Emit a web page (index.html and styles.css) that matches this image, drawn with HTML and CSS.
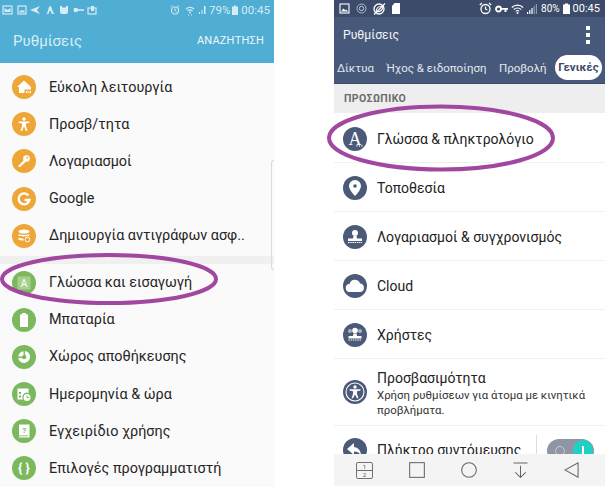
FILE: index.html
```html
<!DOCTYPE html>
<html lang="el">
<head>
    <meta charset="UTF-8">
    <meta name="viewport" content="width=device-width, initial-scale=1.0">
    <title>Ρυθμίσεις</title>
    <link rel="stylesheet" href="styles.css">
</head>
<body>
    <!-- left phone -->
    <div class="samsung">
        <div class="s-status">
            <div class="s-status-icons">
                <svg width="11" height="10" viewBox="0 0 11 10"><rect x="1" y="1" width="9" height="8" fill="none" stroke="#d5ecf5" stroke-width="1.2"/><path d="M2.500 7V3l3 2 3-2v4z" fill="#d5ecf5"/></svg>
                <svg width="10" height="10" viewBox="0 0 10 10"><rect x="1" y="1" width="8" height="8" fill="none" stroke="#d5ecf5" stroke-width="1.2"/><rect x="2.500" y="5.500" width="5" height="2" fill="#d5ecf5"/></svg>
                <svg width="11" height="10" viewBox="0 0 11 10"><path d="M0 5l10-4-3 4 3 4z" fill="#d5ecf5"/></svg>
                <svg width="11" height="10" viewBox="0 0 11 10"><path d="M1 9c2 0 2-7 4-8s2 7 5 8H7L5 5 3.500 9z" fill="#d5ecf5"/></svg>
                <svg width="10" height="10" viewBox="0 0 10 10"><path d="M1 1h2v1.500h4V1h2v6a2 2 0 0 1-2 2H3a2 2 0 0 1-2-2z" fill="#d5ecf5"/></svg>
                <svg width="11" height="10" viewBox="0 0 11 10"><circle cx="2.800" cy="5" r="2.300" fill="#d5ecf5"/><rect x="4" y="4.200" width="7" height="1.600" fill="#d5ecf5"/></svg>
                <svg width="10" height="10" viewBox="0 0 10 10"><rect x="1" y="3" width="8" height="6" fill="none" stroke="#d5ecf5" stroke-width="1.200"/><rect x="4" y="1" width="3" height="5" fill="#d5ecf5"/></svg>
            </div>
            <div class="s-status-right">
                <svg width="10" height="10" viewBox="0 0 10 10"><circle cx="5" cy="5.500" r="3.500" fill="none" stroke="#d5ecf5" stroke-width="1.100"/><path d="M5 3.500v2l1.500 1M.8 2L2.500.7M9.200 2L7.500.7" stroke="#d5ecf5" fill="none"/></svg>
                <svg class="s-wifi" width="10" height="11" viewBox="0 0 10 11"><path d="M1 4a6 6 0 0 1 8 0M2.500 5.800a4 4 0 0 1 5 0" stroke="#d5ecf5" fill="none" stroke-width="1.200"/><circle cx="5" cy="7.500" r="1" fill="#d5ecf5"/><path d="M3 10h1M6 10h1" stroke="#d5ecf5"/></svg>
                <svg width="9" height="10" viewBox="0 0 9 10"><path d="M1 9V7h1v2zM3.500 9V5h1v4zM6 9V1h1.500v8z" fill="#d5ecf5"/></svg>
                <span>79%</span>
                <svg width="6" height="10" viewBox="0 0 6 10"><path d="M0 1.500h2V.5h2v1h2V10H0z" fill="#d5ecf5"/></svg>
                <span class="s-time">00:45</span>
            </div>
        </div>
        <div class="s-header">
            <span class="s-title">Ρυθμίσεις</span>
            <span class="s-search">ΑΝΑΖΗΤΗΣΗ</span>
        </div>
        <div class="s-list">
            <div class="s-row">
                <span class="s-icon orange"><svg width="16" height="16" viewBox="0 0 16 16"><path d="M8 1.500L1 8h2v6h5.500V10.500H15V8z" fill="#fff"/><path d="M10 13h5M10 13l1.300-1M10 13l1.300 1M15 13l-1.300-1M15 13l-1.300 1" stroke="#fff" stroke-width=".9" fill="none"/></svg></span>
                Εύκολη λειτουργία
            </div>
            <div class="s-row">
                <span class="s-icon orange"><svg width="16" height="16" viewBox="0 0 16 16"><circle cx="8" cy="3" r="1.800" fill="#fff"/><path d="M2.500 5.500h11v1.300L10 7.500V10l1.500 5H10L8 10.500 6 15H4.500L6 10V7.500L2.500 6.800z" fill="#fff"/></svg></span>
                Προσβ/τητα
            </div>
            <div class="s-row">
                <span class="s-icon orange"><svg width="16" height="16" viewBox="0 0 16 16"><circle cx="10.500" cy="5.500" r="3.300" fill="#fff"/><path d="M8.500 6.500L2.500 12.500v1.500h2l1-1v-1h1l3-3z" fill="#fff"/><circle cx="11.300" cy="4.700" r=".9" fill="#eea637"/></svg></span>
                Λογαριασμοί
            </div>
            <div class="s-row">
                <span class="s-icon orange"><svg width="16" height="16" viewBox="0 0 16 16"><path d="M12.500 4.500A5.500 5.500 0 1 0 13.500 9H8.500" fill="none" stroke="#fff" stroke-width="2.300"/></svg></span>
                Google
            </div>
            <div class="s-row">
                <span class="s-icon orange"><svg width="16" height="16" viewBox="0 0 16 16"><ellipse cx="8" cy="3.500" rx="5.500" ry="2" fill="#fff"/><path d="M2.500 6c2 1.200 9 1.200 11 0v1.500c-2 1.200-9 1.200-11 0zM2.500 9.500c1.500.8 3.500 1 5 1v2c-2 0-4-.3-5-1z" fill="#fff"/><circle cx="11.500" cy="11.500" r="2.300" fill="none" stroke="#fff"/></svg></span>
                Δημιουργία αντιγράφων ασφ..
            </div>
            <div class="s-gap"></div>
            <div class="s-row">
                <span class="s-icon green"><svg width="16" height="16" viewBox="0 0 16 16"><rect x="1.500" y="1.500" width="13" height="13" rx="1" fill="#a6d08e"/><text x="8" y="12" text-anchor="middle" class="s-icon-a">A</text></svg></span>
                Γλώσσα και εισαγωγή
            </div>
            <div class="s-row">
                <span class="s-icon green"><svg width="16" height="16" viewBox="0 0 16 16"><path d="M6 1h4v1.500h2V15H4V2.500h2z" fill="#fff"/></svg></span>
                Μπαταρία
            </div>
            <div class="s-row">
                <span class="s-icon green"><svg width="16" height="16" viewBox="0 0 16 16"><path d="M9 2a6 6 0 1 1-6.800 7h3.700A2.400 2.400 0 1 0 9 5.700z" fill="#fff"/><path d="M7.500 2.200V6L6 7.500H2.300a6 6 0 0 1 5.200-5.300z" fill="#fff"/></svg></span>
                Χώρος αποθήκευσης
            </div>
            <div class="s-row">
                <span class="s-icon green"><svg width="16" height="16" viewBox="0 0 16 16"><path d="M1.500 2.500h11V7A4.500 4.500 0 0 0 7 13.500H1.500z" fill="#fff"/><rect x="3" y="6" width="2" height="2" fill="#7cb95e"/><rect x="3" y="9.500" width="2" height="2" fill="#7cb95e"/><circle cx="11" cy="11.500" r="3.500" fill="#fff"/><path d="M11 9.500v2h1.800" stroke="#7cb95e" fill="none"/></svg></span>
                Ημερομηνία &amp; ώρα
            </div>
            <div class="s-row">
                <span class="s-icon green"><svg width="16" height="16" viewBox="0 0 16 16"><path d="M3 1.500h10.500v13H3z" fill="#fff"/><path d="M3 12.800h9" stroke="#7cb95e" stroke-width=".8"/><text x="8.200" y="9.500" text-anchor="middle" class="s-icon-q">?</text></svg></span>
                Εγχειρίδιο χρήσης
            </div>
            <div class="s-row">
                <span class="s-icon green"><span class="s-braces">{ }</span></span>
                Επιλογές προγραμματιστή
            </div>
        </div>
        <div class="s-handle"></div>
    </div>

    <!-- right phone -->
    <div class="lg">
        <div class="lg-status">
            <div class="lg-status-icons">
                <svg width="11" height="11" viewBox="0 0 11 11"><rect x="1" y="1" width="9" height="9" fill="none" stroke="#fff" stroke-width="1.100"/><path d="M2 8.500l2.500-3 2 2 1-1 1.500 2z" fill="#fff"/></svg>
                <svg width="11" height="11" viewBox="0 0 11 11"><circle cx="5.500" cy="5.500" r="4.500" fill="none" stroke="#c8d0dd" stroke-width=".8"/><circle cx="5.500" cy="5.500" r="2.200" fill="none" stroke="#c8d0dd" stroke-width=".9"/></svg>
                <svg width="13" height="12" viewBox="0 0 13 12"><circle cx="6" cy="6" r="5" fill="none" stroke="#fff" stroke-width="1.300"/><path d="M3 9c0-4 3-6 7-6 0 4-3 6-7 6zM1 11.500L12 .5" fill="none" stroke="#fff" stroke-width="1.100"/></svg>
                <svg width="8" height="11" viewBox="0 0 8 11"><path d="M2.500 0H8v11H0V3z" fill="#fff"/></svg>
            </div>
            <div class="lg-status-right">
                <svg width="13" height="13" viewBox="0 0 13 13"><circle cx="6.500" cy="7" r="4.500" fill="none" stroke="#fff" stroke-width="1.300"/><path d="M6.500 4.500V7l1.800 1M.8 3L3 1M12.200 3L10 1" stroke="#fff" fill="none" stroke-width="1.200"/></svg>
                <svg class="lg-key" width="13" height="8" viewBox="0 0 13 8"><circle cx="3.500" cy="4" r="2.500" fill="none" stroke="#fff" stroke-width="1.800"/><path d="M5.500 3h7.500v1.800h-1.500V7H9.500V4.800h-4z" fill="#fff"/></svg>
                <svg width="13" height="10" viewBox="0 0 13 10"><path d="M.8 3.500a8 8 0 0 1 11.400 0M2.800 5.500a5.200 5.200 0 0 1 7.400 0M4.800 7.300a2.500 2.500 0 0 1 3.400 0" fill="none" stroke="#fff" stroke-width="1.100"/><circle cx="6.500" cy="9" r="1" fill="#fff"/></svg>
                <svg width="11" height="10" viewBox="0 0 11 10"><path d="M0 8h1.200v2H0zM2.200 6h1.200v4H2.200zM4.400 4h1.200v6H4.400z" fill="#fff"/><path d="M6.600 2h1.200v8H6.600zM8.800 0H10v10H8.800z" fill="#8c98ae"/></svg>
                <span class="lg-pct">80%</span>
                <svg width="7" height="11" viewBox="0 0 7 11"><path d="M0 1.500h2V.5h3v1h2V11H0z" fill="#fff"/></svg>
                <span>00:45</span>
            </div>
        </div>
        <div class="lg-header">
            <div class="lg-title-row">
                <span class="lg-title">Ρυθμίσεις</span>
                <span class="lg-dots"><i></i><i></i><i></i></span>
            </div>
            <div class="lg-tabs">
                <span class="lg-tab tab-net">Δίκτυα</span>
                <span class="lg-tab tab-sound">Ήχος &amp; ειδοποίηση</span>
                <span class="lg-tab tab-view">Προβολή</span>
                <span class="lg-tab-active">Γενικές</span>
            </div>
        </div>
        <div class="lg-section">ΠΡΟΣΩΠΙΚΟ</div>
        <div class="lg-list">
            <div class="lg-row">
                <span class="lg-icon"><span class="lg-letter">A</span><svg class="lg-letter-dots" width="7" height="2" viewBox="0 0 7 2"><circle cx="1" cy="1" r=".7" fill="#fff"/><circle cx="3.500" cy="1" r=".7" fill="#fff"/><circle cx="6" cy="1" r=".7" fill="#fff"/></svg></span>
                Γλώσσα &amp; πληκτρολόγιο
            </div>
            <div class="lg-row">
                <span class="lg-icon"><svg width="16" height="18" viewBox="0 0 16 18"><path d="M8 1a6 6 0 0 0-6 6c0 4 6 10 6 10s6-6 6-10a6 6 0 0 0-6-6z" fill="#fff"/><circle cx="8" cy="7" r="1.800" fill="#4a5a78"/></svg></span>
                Τοποθεσία
            </div>
            <div class="lg-row">
                <span class="lg-icon"><svg width="18" height="18" viewBox="0 0 18 18"><circle cx="9" cy="5" r="3" fill="#fff"/><path d="M7.500 8h3l.5 2.500H16V13H2v-2.500h5z" fill="#fff"/><path d="M2 14.500h14" stroke="#fff" stroke-dasharray="1.500 .7"/></svg></span>
                Λογαριασμοί &amp; συγχρονισμός
            </div>
            <div class="lg-row">
                <span class="lg-icon"><svg width="20" height="14" viewBox="0 0 20 14"><path d="M5 13a4 4 0 0 1-.5-8A5.500 5.500 0 0 1 15 4.500 4.300 4.300 0 0 1 15.500 13z" fill="#fff"/></svg></span>
                Cloud
            </div>
            <div class="lg-row">
                <span class="lg-icon"><svg width="20" height="18" viewBox="0 0 20 18"><circle cx="5" cy="5" r="2" fill="#aab3c4"/><circle cx="15" cy="5" r="2" fill="#aab3c4"/><circle cx="10" cy="4.500" r="2.800" fill="#fff"/><path d="M8.500 7.500h3l.5 2.500h4.500v2.500h-13V10H8z" fill="#fff"/><path d="M3.500 14h13" stroke="#fff" stroke-dasharray="1.500 .7"/></svg></span>
                Χρήστες
            </div>
            <div class="lg-row lg-row-tall">
                <span class="lg-icon"><svg width="20" height="20" viewBox="0 0 20 20"><circle cx="10" cy="10" r="9" fill="none" stroke="#fff" stroke-width="1.100"/><circle cx="10" cy="5" r="1.700" fill="#fff"/><path d="M4.500 7.300h11v1.200L12 9.300V12l1.500 4.300H12L10 12.500 8 16.300H6.500L8 12V9.300L4.500 8.500z" fill="#fff"/></svg></span>
                <div class="lg-row-text">
                    <div>Προσβασιμότητα</div>
                    <div class="lg-sub">Χρήση ρυθμίσεων για άτομα με κινητικά προβλήματα.</div>
                </div>
            </div>
            <div class="lg-row lg-row-cut">
                <span class="lg-icon"><svg width="18" height="16" viewBox="0 0 18 16"><path d="M8 1L1 7l7 6V9.500c3 0 5 1 7 4 0-5-3-8-7-8.500z" fill="#fff"/></svg></span>
                <span class="lg-cut-label">Πλήκτρο συντόμευσης</span>
                <span class="lg-switch-wrap"><span class="lg-switch"><i class="lg-switch-o"></i><i class="lg-knob"></i></span></span>
            </div>
        </div>
        <div class="lg-nav">
            <svg width="17" height="17" viewBox="0 0 18 18"><rect x=".5" y=".5" width="17" height="17" rx="1.500" fill="#f4f4f4" stroke="#666"/><path d="M.5 9h17" stroke="#666"/><text x="9" y="7.300" text-anchor="middle" class="nav-num">1</text><text x="9" y="15.800" text-anchor="middle" class="nav-num">2</text></svg>
            <svg width="16" height="16" viewBox="0 0 17 17"><rect x=".7" y=".7" width="15.600" height="15.600" fill="none" stroke="#666" stroke-width="1.100"/></svg>
            <svg width="16" height="16" viewBox="0 0 17 17"><circle cx="8.500" cy="8.500" r="7.800" fill="none" stroke="#666" stroke-width="1.100"/></svg>
            <svg width="15" height="16" viewBox="0 0 16 17"><path d="M.5 1h15M8 4v12.500M2.500 11L8 16.500 13.500 11" fill="none" stroke="#666" stroke-width="1.100"/></svg>
            <svg width="15" height="16" viewBox="0 0 16 17"><path d="M15 .8v15.400L1 8.500z" fill="none" stroke="#666" stroke-width="1.100"/></svg>
        </div>
    </div>

    <!-- hand drawn rings over the screenshots -->
    <svg class="ring ring-left" width="222" height="52" viewBox="0 0 222 52"><ellipse cx="109" cy="26" rx="107" ry="24" fill="none" stroke="#a2479f" stroke-width="4"/></svg>
    <svg class="ring ring-right" width="232" height="70" viewBox="0 0 232 70"><ellipse cx="116" cy="35" rx="112" ry="31.500" fill="none" stroke="#a2479f" stroke-width="4"/></svg>
</body>
</html>
```

FILE: styles.css
```css
body {
    margin: 0;
    width: 609px;
    height: 487px;
    overflow: hidden;
    display: flex;
    position: relative;
    background: #fff;
    font-family: Roboto, "Noto Sans", sans-serif;
}

/* left phone */
.samsung {
    width: 274px;
    height: 487px;
    margin-right: 60px;
    background: #fafafa;
    flex-shrink: 0;
    position: relative;
}
.s-status {
    height: 20px;
    background: #50add3;
    color: #d5ecf5;
    font-size: 11.5px;
    display: flex;
    justify-content: space-between;
    align-items: center;
    padding: 0 4px 0 2px;
}
.s-status-icons {
    display: flex;
    gap: 3.5px;
    align-items: center;
}
.s-status-right {
    display: flex;
    gap: 2px;
    align-items: center;
}
.s-wifi {
    margin-left: 3px;
    margin-right: 1px;
}
.s-time {
    margin-left: 1px;
}
.s-header {
    height: 41px;
    background: #50add3;
    display: flex;
    justify-content: space-between;
    align-items: center;
    padding: 0 10px 2px 13px;
}
.s-title {
    color: #d8eef7;
    font-size: 15px;
}
.s-search {
    color: #eef8fc;
    font-size: 11px;
    letter-spacing: .2px;
}
.s-list {
    padding-top: 5.5px;
}
.s-row {
    height: 37.2px;
    display: flex;
    align-items: center;
    gap: 13px;
    padding-left: 12px;
    font-size: 14.4px;
    color: #252525;
}
.s-icon {
    width: 24px;
    height: 24px;
    border-radius: 50%;
    display: flex;
    align-items: center;
    justify-content: center;
    flex-shrink: 0;
}
.orange {
    background: #eea637;
}
.green {
    background: #7cb95e;
}
.s-icon-a {
    font-size: 10px;
    fill: #fff;
}
.s-icon-q {
    font-size: 8px;
    font-weight: bold;
    fill: #7cb95e;
}
.s-braces {
    color: #fff;
    font-size: 13px;
    font-weight: bold;
    margin-top: -2px;
}
.s-gap {
    height: 8px;
    background: #f0f0f0;
    margin-top: 1.5px;
}
.s-handle {
    position: absolute;
    right: 0;
    top: 160px;
    width: 3px;
    height: 110px;
    border: 1px solid #dcdcdc;
    border-right: none;
    border-radius: 4px 0 0 4px;
    box-sizing: border-box;
}

/* right phone */
.lg {
    width: 271px;
    height: 486px;
    display: flex;
    flex-direction: column;
    flex-shrink: 0;
    background: #fff;
}
.lg-status {
    height: 17px;
    background: #3c4b6a;
    color: #fff;
    font-size: 11px;
    display: flex;
    justify-content: space-between;
    align-items: center;
    padding: 0 5px 0 5px;
}
.lg-status-icons {
    display: flex;
    gap: 6px;
    align-items: center;
}
.lg-status-right {
    display: flex;
    align-items: center;
    gap: 3px;
}
.lg-pct {
    font-size: 10px;
}
.lg-header {
    background: #47597a;
    height: 67px;
    border-bottom: 1px solid #3c4b6a;
    box-sizing: border-box;
}
.lg-title-row {
    height: 35px;
    display: flex;
    align-items: center;
    justify-content: space-between;
    padding: 0 15px 0 9px;
}
.lg-title {
    color: #f2f4f7;
    font-size: 12.2px;
}
.lg-dots {
    display: flex;
    flex-direction: column;
    gap: 3px;
}
.lg-dots i {
    width: 4px;
    height: 4px;
    background: #fff;
    display: block;
}
.lg-tabs {
    display: flex;
    align-items: center;
    height: 25px;
    margin-top: 3px;
    font-size: 11.5px;
    color: #e4e8ee;
    white-space: nowrap;
}
.lg-tab {
    display: block;
}
.tab-net {
    padding-left: 3px;
    width: 37px;
}
.tab-sound {
    margin-left: 12px;
    width: 100px;
    overflow: hidden;
}
.tab-view {
    margin-left: 13px;
    width: 46px;
}
.lg-tab-active {
    margin-left: 10px;
    width: 47px;
    height: 25px;
    line-height: 25px;
    border-radius: 13px;
    background: #fff;
    color: #3c4b6a;
    font-weight: bold;
    font-size: 11.5px;
    text-align: center;
}
.lg-section {
    height: 29px;
    background: #eeeeee;
    color: #6c6c6c;
    font-size: 10.5px;
    font-weight: bold;
    padding-left: 10px;
    line-height: 29px;
    letter-spacing: .4px;
}
.lg-list {
    flex: 1;
    overflow: hidden;
    padding-top: 1px;
}
.lg-row {
    height: 49px;
    box-sizing: border-box;
    display: flex;
    align-items: center;
    gap: 10px;
    padding-left: 9px;
    padding-top: 1px;
    border-bottom: 1px solid #f0f0f0;
    font-size: 14px;
    color: #222;
}
.lg-row-tall {
    height: 66.5px;
}
.lg-row-text {
    line-height: 17px;
    margin-top: 4px;
}
.lg-sub {
    font-size: 11.4px;
    line-height: 15px;
    color: #333;
    margin-top: 1px;
    padding-right: 8px;
}
.lg-row-cut {
    position: relative;
    align-items: flex-start;
    padding-top: 12px;
    padding-right: 11px;
    border-bottom: none;
}
.lg-cut-label {
    margin-top: 4px;
    white-space: nowrap;
}
.lg-switch-wrap {
    margin-left: auto;
    padding-left: 10px;
    margin-top: -3px;
    border-left: 1px solid #ddd;
    height: 38px;
    display: block;
}
.lg-switch {
    display: block;
    width: 47px;
    height: 24px;
    margin-top: 4px;
    border-radius: 12px;
    background: #8f96a3;
    position: relative;
}
.lg-switch-o {
    position: absolute;
    left: 8px;
    top: 7px;
    width: 8px;
    height: 8px;
    border: 1px solid #c8ccd3;
    border-radius: 50%;
}
.lg-knob {
    position: absolute;
    right: 1px;
    top: 1px;
    width: 20px;
    height: 22px;
    border-radius: 50%;
    background: #1fd1c4;
    display: flex;
    align-items: center;
    justify-content: center;
}
.lg-knob::after {
    content: "";
    width: 2px;
    height: 9px;
    background: #fff;
}
.lg-icon {
    width: 24px;
    height: 24px;
    border-radius: 50%;
    background: #4a5a78;
    display: flex;
    align-items: center;
    justify-content: center;
    flex-shrink: 0;
    position: relative;
}
.lg-letter {
    color: #fff;
    font-family: "Liberation Serif", serif;
    font-size: 18px;
    line-height: 1;
}
.lg-letter-dots {
    position: absolute;
    right: 4px;
    bottom: 4px;
}
.lg-nav {
    height: 32px;
    background: #f4f4f4;
    display: flex;
    align-items: center;
    gap: 36px;
    padding-left: 22px;
    flex-shrink: 0;
}
.nav-num {
    font-size: 6.5px;
    fill: #555;
}

/* rings */
.ring {
    position: absolute;
}
.ring-left {
    left: 0;
    top: 253px;
}
.ring-right {
    left: 325px;
    top: 103px;
}
```
